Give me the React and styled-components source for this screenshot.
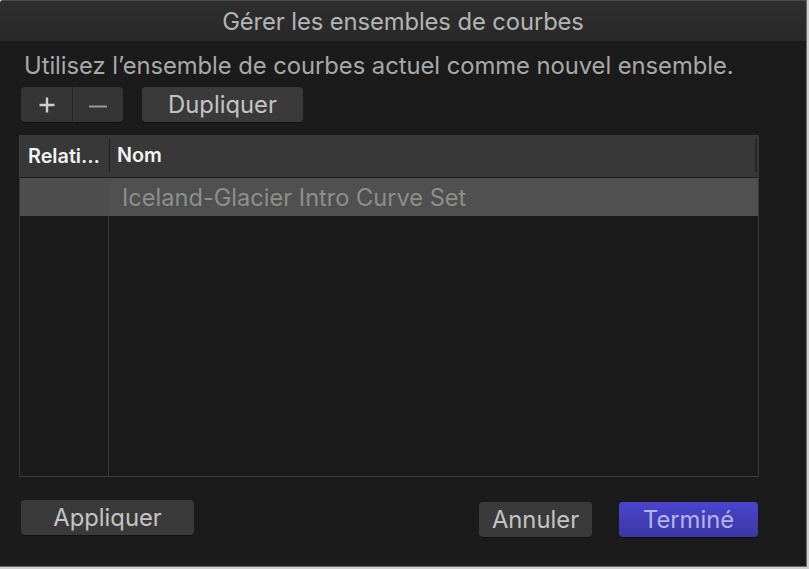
import React from "react";
import styled, { createGlobalStyle } from "styled-components";

const Global = createGlobalStyle`
  html, body { margin: 0; padding: 0; background: #cfcfcf; }
  body { font-family: Inter, "Noto Sans", "Liberation Sans", sans-serif; }
`;

const Window = styled.div`
  width: 806px;
  height: 566px;
  background: #1b1b1b;
  border-right: 1px solid #6a6a6a;
  border-bottom: 1px solid #6a6a6a;
  display: flex;
  flex-direction: column;
  border-top-left-radius: 4px;
  overflow: hidden;
`;

const TitleBar = styled.div`
  height: 41px;
  flex: none;
  background: linear-gradient(#2e2e2e, #292929);
  border-top: 1px solid #4a4a4a;
  box-sizing: border-box;
  display: flex;
  align-items: center;
  justify-content: center;
  color: #b4b4b4;
  font-size: 23.8px;
  letter-spacing: -0.1px;
`;

const Content = styled.div`
  flex: 1;
  display: flex;
  flex-direction: column;
  padding: 12px 0 0 19px;
`;

const Subtitle = styled.div`
  color: #a9a9a9;
  font-size: 23.8px;
  line-height: 26px;
  padding-left: 5px;
  letter-spacing: -0.05px;
`;

const Toolbar = styled.div`
  display: flex;
  gap: 19px;
  margin-top: 8px;
  padding-left: 2px;
`;

const Segmented = styled.div`
  display: flex;
  width: 102px;
  height: 35px;
  border-radius: 4px;
  background: #353535;
  overflow: hidden;
  box-shadow: 0 1px 0 rgba(0, 0, 0, 0.35);
`;

const SegButton = styled.div`
  flex: ${(p) => (p.$first ? "0 0 51px" : "1")};
  display: flex;
  align-items: center;
  justify-content: center;
  border-right: ${(p) => (p.$first ? "1px solid #262626" : "none")};
`;

const Button = styled.div`
  width: ${(p) => p.$w}px;
  height: 35px;
  box-sizing: border-box;
  border-radius: 4px;
  background: ${(p) =>
    p.$primary ? "linear-gradient(#4a45cc, #3b37a6)" : "#3a3a3a"};
  color: ${(p) => (p.$primary ? "#b6b3e6" : "#c4c4c4")};
  font-size: 23.8px;
  display: flex;
  align-items: center;
  justify-content: center;
  box-shadow: 0 1px 0 rgba(0, 0, 0, 0.35);
`;

const Table = styled.div`
  margin-top: 13px;
  width: 740px;
  height: 342px;
  box-sizing: border-box;
  border: 1px solid #3a3a3a;
  display: flex;
  flex-direction: column;
`;

const Header = styled.div`
  height: 42px;
  flex: none;
  box-sizing: border-box;
  background: #383838;
  border-bottom: 1px solid #1d1d1d;
  display: grid;
  grid-template-columns: 89px 1fr;
  position: relative;
`;

const HeadCell = styled.div`
  display: flex;
  align-items: center;
  color: #f2f2f2;
  font-size: 19.8px;
  font-weight: 600;
  padding-left: ${(p) => p.$pad}px;
  padding-bottom: 2px;
  border-left: ${(p) => (p.$divider ? "1px solid #1e1e1e" : "none")};
  margin: ${(p) => (p.$divider ? "3px 0 5px 0" : "0")};
  white-space: nowrap;
`;

const Scroller = styled.div`
  position: absolute;
  right: 1px;
  top: 3px;
  bottom: 5px;
  width: 2px;
  background: #262626;
`;

const Row = styled.div`
  height: 38px;
  flex: none;
  display: grid;
  grid-template-columns: 89px 1fr;
  background: #505050;
`;

const Cell = styled.div`
  display: flex;
  align-items: center;
  padding-left: ${(p) => p.$pad || 0}px;
  color: #8e8e8e;
  font-size: 23.6px;
  white-space: nowrap;
  background: ${(p) => p.$bg || "transparent"};
`;

const Filler = styled.div`
  flex: 1;
  display: grid;
  grid-template-columns: 89px 1fr;
`;

const FillCol = styled.div`
  border-right: ${(p) => (p.$divider ? "1px solid #3a3a3a" : "none")};
`;

const Footer = styled.div`
  display: flex;
  align-items: flex-start;
  margin-top: 23px;
  padding-left: 2px;
  width: 737px;
`;

const Spacer = styled.div`
  flex: 1;
`;

const FooterRight = styled.div`
  display: flex;
  gap: 27px;
  margin-top: 2px;
`;

export default function App() {
  return (
    <>
      <Global />
      <Window>
        <TitleBar>Gérer les ensembles de courbes</TitleBar>
        <Content>
          <Subtitle>Utilisez l’ensemble de courbes actuel comme nouvel ensemble.</Subtitle>
          <Toolbar>
            <Segmented>
              <SegButton $first>
                <svg width="18" height="18" viewBox="0 0 18 18">
                  <path d="M9 1.5v15M1.5 9h15" stroke="#cfcfcf" strokeWidth="2.4" />
                </svg>
              </SegButton>
              <SegButton>
                <svg width="20" height="18" viewBox="0 0 20 18">
                  <path d="M1 10.5h18" stroke="#9a9a9a" strokeWidth="1.8" />
                </svg>
              </SegButton>
            </Segmented>
            <Button $w={161}>Dupliquer</Button>
          </Toolbar>
          <Table>
            <Header>
              <HeadCell $pad={8}>Relati…</HeadCell>
              <HeadCell $pad={7} $divider>Nom</HeadCell>
              <Scroller />
            </Header>
            <Row>
              <Cell $bg="#4e4e4e" />
              <Cell $pad={13}>Iceland-Glacier Intro Curve Set</Cell>
            </Row>
            <Filler>
              <FillCol $divider />
              <FillCol />
            </Filler>
          </Table>
          <Footer>
            <Button $w={173}>Appliquer</Button>
            <Spacer />
            <FooterRight>
              <Button $w={113}>Annuler</Button>
              <Button $w={139} $primary>Terminé</Button>
            </FooterRight>
          </Footer>
        </Content>
      </Window>
    </>
  );
}
